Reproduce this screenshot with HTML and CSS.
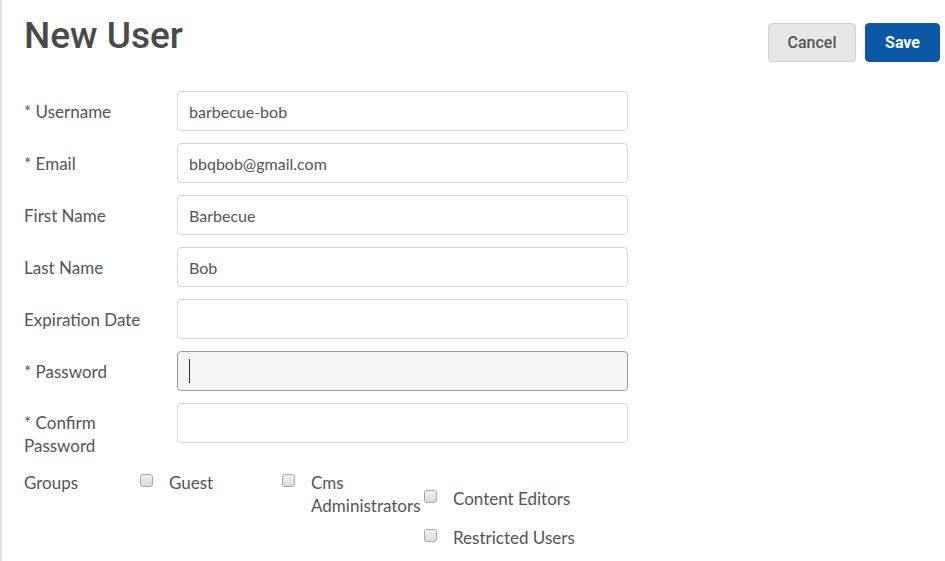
FILE: index.html
```html
<!DOCTYPE html>
<html>
<head>
<meta charset="utf-8">
<link rel="stylesheet" href="styles.css">
</head>
<body>
<div class="page">
  <header class="head">
    <h1 class="title">New User</h1>
    <div class="actions">
      <button class="btn btn-cancel">Cancel</button>
      <button class="btn btn-save">Save</button>
    </div>
  </header>
  <form class="form">
    <div class="row"><label class="lbl">* Username</label><input class="field" type="text" value="barbecue-bob"></div>
    <div class="row"><label class="lbl">* Email</label><input class="field" type="text" value="bbqbob@gmail.com"></div>
    <div class="row"><label class="lbl">First Name</label><input class="field" type="text" value="Barbecue"></div>
    <div class="row"><label class="lbl">Last Name</label><input class="field" type="text" value="Bob"></div>
    <div class="row"><label class="lbl">Expiration Date</label><input class="field" type="text" value=""></div>
    <div class="row"><label class="lbl">* Password</label><div class="field-wrap"><input class="field field-focus" type="password" value=""><span class="caret"></span></div></div>
    <div class="row row-top"><label class="lbl lbl-multi">* Confirm Password</label><input class="field" type="password" value=""></div>
    <div class="row groups">
      <label class="lbl lbl-groups">Groups</label>
      <div class="options">
        <label class="opt"><input class="cb" type="checkbox"><span class="opt-text">Guest</span></label>
        <label class="opt"><input class="cb" type="checkbox"><span class="opt-text">Cms Administrators</span></label>
        <div class="opt-col">
          <label class="opt opt-auto"><input class="cb" type="checkbox"><span class="opt-text">Content Editors</span></label>
          <label class="opt opt-auto"><input class="cb" type="checkbox"><span class="opt-text">Restricted Users</span></label>
        </div>
      </div>
    </div>
  </form>
</div>
</body>
</html>
```

FILE: styles.css
```css
html, body {
  margin: 0;
  padding: 0;
  background: #fff;
}
.page {
  border-left: 2px solid #e3e3e3;
  min-height: 561px;
  box-sizing: border-box;
  padding: 0 5px 0 22px;
  font-family: "Lato", "Open Sans", sans-serif;
  color: #555;
}
.head {
  display: flex;
  justify-content: space-between;
  align-items: flex-start;
}
.title {
  margin: 0;
  padding-top: 14px;
  font-family: "Roboto", sans-serif;
  font-weight: 500;
  font-size: 37px;
  line-height: 44px;
  color: #4a4a4a;
}
.actions {
  display: flex;
  gap: 9px;
  margin-top: 23px;
}
.btn {
  height: 39px;
  border-radius: 4px;
  font-family: "Roboto", sans-serif;
  font-size: 16px;
  cursor: pointer;
}
.btn-cancel {
  width: 88px;
  background: #e6e6e6;
  border: 1px solid #d2d2d2;
  color: #555;
  font-weight: 500;
}
.btn-save {
  width: 75px;
  background: #0b58a6;
  border: 1px solid #0b58a6;
  color: #fff;
  font-weight: 700;
}
.form {
  display: flex;
  flex-direction: column;
  gap: 12px;
  margin-top: 29px;
}
.row {
  display: flex;
  align-items: center;
}
.row-top {
  align-items: flex-start;
}
.lbl {
  width: 153px;
  flex: none;
  font-size: 17px;
  line-height: 23px;
  color: #555;
}
.lbl-multi {
  width: 120px;
  margin-right: 33px;
  padding-top: 8px;
}
.field-wrap {
  position: relative;
  display: flex;
}
.field {
  width: 451px;
  height: 40px;
  box-sizing: border-box;
  border: 1px solid #d8d8d8;
  border-radius: 4px;
  padding: 0 11px;
  font-family: "Lato", "Open Sans", sans-serif;
  font-size: 16px;
  color: #555;
  background: #fff;
  outline: none;
}
.field-focus {
  background: #f5f5f5;
  border-color: #9a9a9a;
}
.caret {
  position: absolute;
  left: 12px;
  top: 8px;
  width: 1px;
  height: 24px;
  background: #333;
}
.groups {
  align-items: flex-start;
}
.lbl-groups {
  width: 116px;
  padding-top: 2px;
}
.options {
  display: flex;
  align-items: flex-start;
}
.opt {
  display: flex;
  align-items: flex-start;
  width: 142px;
  font-size: 17px;
  line-height: 23px;
  color: #555;
}
.opt-auto {
  width: auto;
}
.opt-col {
  display: flex;
  flex-direction: column;
  gap: 14px;
  margin-top: 16px;
}
.opt-text {
  width: 113px;
  padding-top: 2px;
}
.opt-auto .opt-text {
  width: auto;
}
.cb {
  appearance: none;
  -webkit-appearance: none;
  flex: none;
  width: 13px;
  height: 13px;
  margin: 5px 16px 0 0;
  border: 1px solid #a8a8a8;
  border-radius: 3px;
  background: linear-gradient(#f0f0f0, #dcdcdc);
  box-sizing: border-box;
}
```
